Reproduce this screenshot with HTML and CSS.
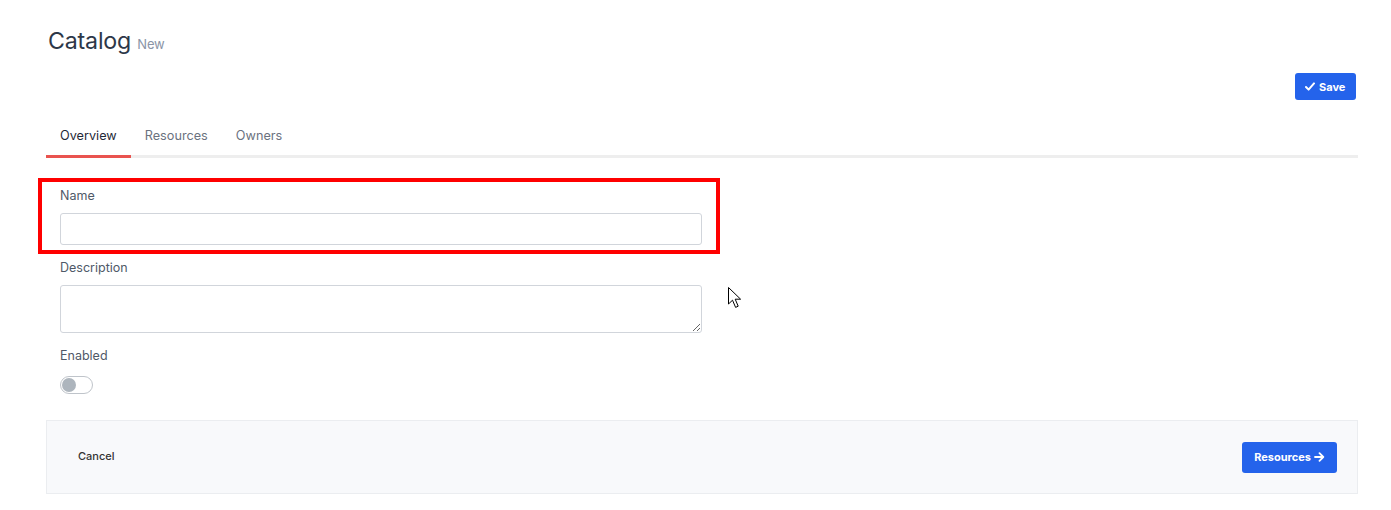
FILE: index.html
```html
<!DOCTYPE html>
<html>
<head>
<meta charset="utf-8">
<link rel="stylesheet" href="styles.css">
</head>
<body>
<div class="page">
  <h1 class="title">Catalog <span class="sub">New</span></h1>
  <div class="actions">
    <button class="btn btn-primary btn-save"><svg width="10" height="9" viewBox="0 0 10 9"><path d="M1 5 L3.6 7.6 L9 1.4" fill="none" stroke="#fff" stroke-width="2" stroke-linecap="round" stroke-linejoin="round"/></svg>Save</button>
  </div>
  <div class="tabs">
    <div class="tab active">Overview</div>
    <div class="tab">Resources</div>
    <div class="tab">Owners</div>
  </div>
  <div class="form">
    <div class="group highlighted">
      <label class="label">Name</label>
      <input class="input" type="text">
      <div class="highlight"></div>
    </div>
    <div class="group">
      <label class="label">Description</label>
      <textarea class="textarea"></textarea>
      <svg class="cursor" width="16" height="24" viewBox="0 0 16 24"><path d="M1.5 1.5 L1.5 18 L5.5 14.2 L8.6 21.4 L11.2 20.2 L8.2 13.2 L13.6 13.2 Z" fill="#fff" stroke="#000" stroke-width="1" stroke-linejoin="round"/></svg>
    </div>
    <div class="group">
      <label class="label">Enabled</label>
      <div class="toggle"><span class="knob"></span></div>
    </div>
  </div>
  <div class="footer">
    <span class="cancel">Cancel</span>
    <button class="btn btn-primary btn-next">Resources<svg width="11" height="10" viewBox="0 0 11 10"><path d="M1 5 H9 M5.5 1.2 L9.3 5 L5.5 8.8" fill="none" stroke="#fff" stroke-width="1.8" stroke-linecap="round" stroke-linejoin="round"/></svg></button>
  </div>
</div>
</body>
</html>
```

FILE: styles.css
```css
* { box-sizing: border-box; }
html, body { margin: 0; background: #fff; }
body { font-family: Inter, "Noto Sans", sans-serif; color: #2d3748; }
.page { padding: 26px 33px 0 46px; }
.title { margin: 0 0 0 2px; font-size: 23.2px; font-weight: 400; color: #2d3748; line-height: 30px; letter-spacing: -0.2px; }
.title .sub { font-size: 13px; color: #8a94a6; margin-left: 0; }
.actions { display: flex; justify-content: flex-end; margin-top: 14px; margin-right: 2px; }
.btn { font-family: Inter, sans-serif; border: none; border-radius: 3px; color: #fff; font-weight: 700; cursor: pointer; display: inline-flex; align-items: center; }
.btn-primary { background: #2463eb; }
.btn-save { height: 27px; width: 61px; font-size: 11px; padding: 0 0 0 10px; gap: 4px; }
.tabs { display: flex; margin-top: 23px; border-bottom: 3px solid #eeeeee; }
.tab { font-size: 12.7px; color: #6b7280; padding: 0 14px; height: 35px; line-height: 15px; padding-top: 5px; margin-bottom: -3px; border-bottom: 3px solid transparent; }
.tab.active { color: #1f2937; border-bottom-color: #e9534f; }
.form { padding: 30px 0 0 14px; }
.group { position: relative; width: 642px; margin-bottom: 15px; }
.label { display: block; font-size: 12.5px; color: #4f5968; line-height: 16px; margin-bottom: 9px; }
.input { display: block; width: 642px; height: 32px; border: 1px solid #d1d5db; border-radius: 3px; background: #fff; }
.textarea { display: block; width: 642px; height: 48px; border: 1px solid #d1d5db; border-radius: 3px; resize: vertical; margin: 0; font-family: Inter, sans-serif; }
.highlight { position: absolute; left: -22px; top: -10px; width: 682px; height: 76px; border: 4px solid #ff0000; pointer-events: none; }
.cursor { position: absolute; left: 667px; top: 26px; }
.toggle { width: 33px; height: 18px; border: 1px solid #bfc4ca; border-radius: 9px; background: #fff; position: relative; margin-top: 12px; }
.knob { position: absolute; left: 1px; top: 1px; width: 14px; height: 14px; border-radius: 50%; background: #adb5bd; }
.footer { margin-top: 26px; height: 74px; background: #f8f9fb; border: 1px solid #ebedf0; display: flex; align-items: center; justify-content: space-between; padding: 0 20px 0 31px; }
.cancel { font-size: 11px; font-weight: 500; color: #333; margin-top: -3px; }
.btn-next { height: 31px; padding: 0 12px; font-size: 11px; gap: 3px; }
```
